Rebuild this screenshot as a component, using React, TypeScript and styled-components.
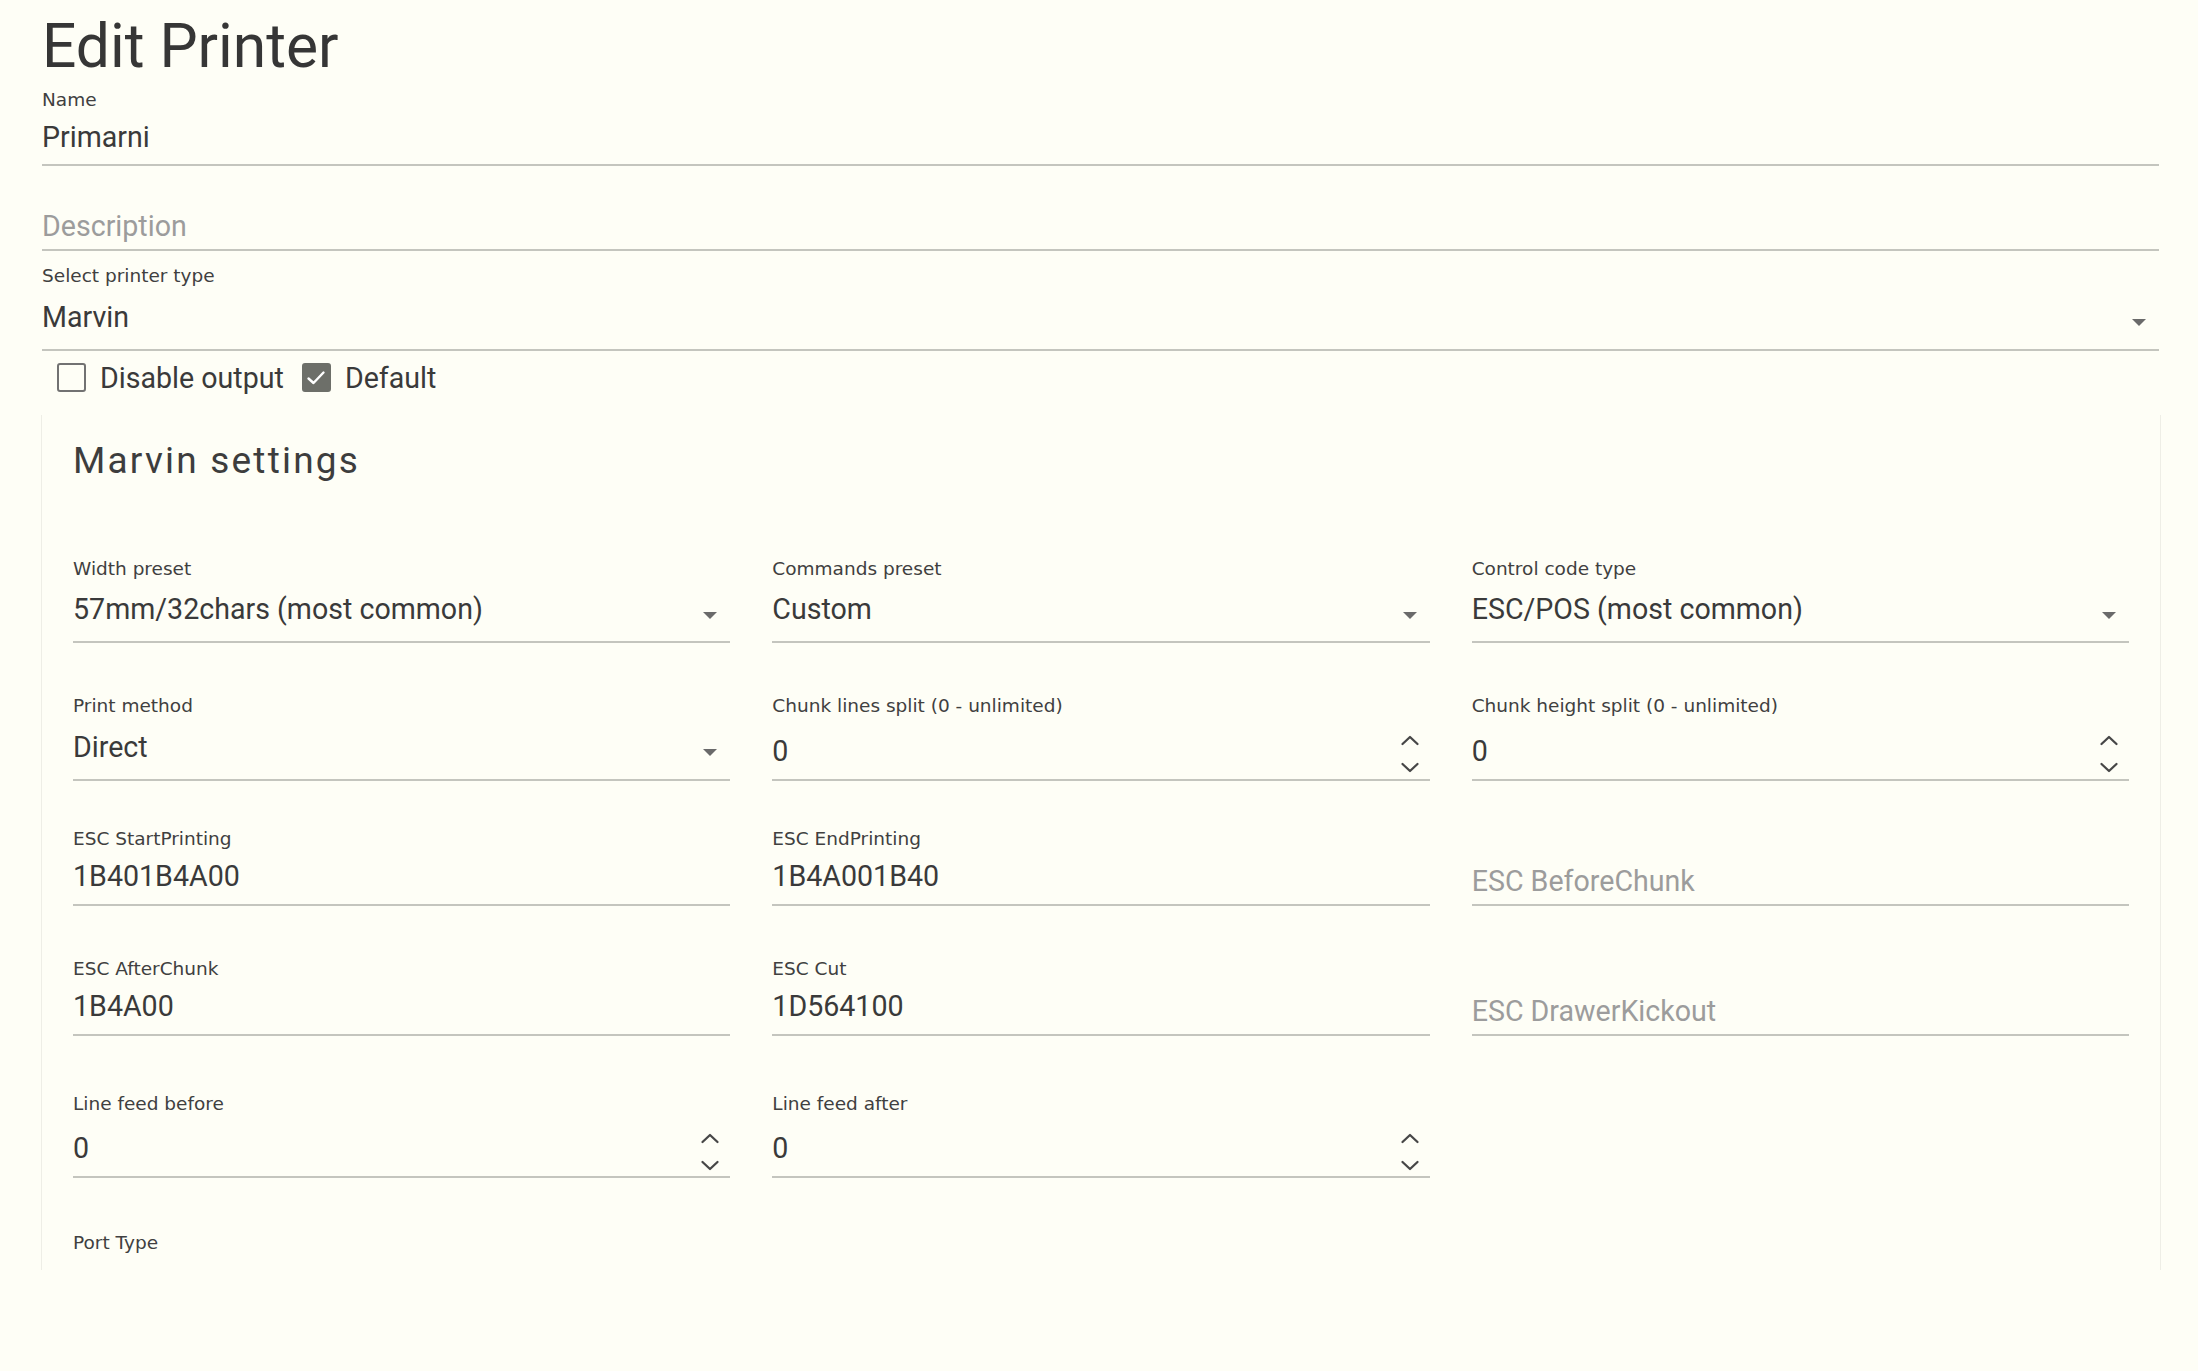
import React from "react";
import styled, { createGlobalStyle } from "styled-components";

type Kind = "text" | "select" | "number";

const Global = createGlobalStyle`
  html, body {
    margin: 0;
    padding: 0;
    background: #fefef6;
  }
  body {
    font-family: Roboto, "Noto Sans", sans-serif;
  }
`;

const Page = styled.div`
  width: 2198px;
  height: 1371px;
  box-sizing: border-box;
  padding: 17px 39px 0 42px;
  display: flex;
  flex-direction: column;
  background: #fefef6;
  overflow: hidden;
`;

const Title = styled.h1`
  margin: 0 0 14.5px;
  font: 400 60.5px/59px Roboto, sans-serif;
  color: #363636;
`;

const FieldBox = styled.div<{ $mt?: number }>`
  display: flex;
  flex-direction: column;
  min-width: 0;
  margin-top: ${(p) => p.$mt ?? 0}px;
`;

const Label = styled.label`
  display: block;
  height: 18px;
  font: 400 18.5px/18px "DejaVu Sans", Verdana, sans-serif;
  color: #404040;
  white-space: nowrap;
`;

const gapFor: Record<Kind, number> = { text: 14, select: 17.2, number: 20 };
const padFor: Record<Kind, number> = { text: 13.8, select: 18, number: 14.2 };
const PLACEHOLDER_SHIFT = 5;

const InputRow = styled.div<{ $kind: Kind }>`
  display: flex;
  align-items: flex-end;
  margin-top: ${(p) => gapFor[p.$kind]}px;
  border-bottom: 2px solid #c4c5be;
`;

const Value = styled.div<{ $kind: Kind; $placeholder?: boolean }>`
  flex: 1;
  min-width: 0;
  font: 400 28.6px/28px Roboto, sans-serif;
  color: ${(p) => (p.$placeholder ? "#9c9c9c" : "#3a3a3a")};
  padding-top: ${(p) => (p.$placeholder ? PLACEHOLDER_SHIFT : 0)}px;
  padding-bottom: ${(p) => padFor[p.$kind] - (p.$placeholder ? PLACEHOLDER_SHIFT : 0)}px;
  white-space: nowrap;
`;

const Caret = styled.span`
  flex: none;
  width: 0;
  height: 0;
  border-left: 7px solid transparent;
  border-right: 7px solid transparent;
  border-top: 7px solid #6a6a6a;
  margin: 0 13px 22.5px 8px;
`;

const Spin = styled.div`
  flex: none;
  display: flex;
  flex-direction: column;
  gap: 16px;
  margin: 0 10px 5.5px 8px;
  color: #474747;
`;

const CheckRow = styled.div`
  display: flex;
  align-items: center;
  gap: 18px;
  height: 28px;
  padding-left: 15px;
  margin-top: 13.2px;
`;

const CheckItem = styled.label`
  display: flex;
  align-items: center;
  gap: 14px;
  font: 400 28.6px/28px Roboto, sans-serif;
  color: #3a3a3a;
`;

const Box = styled.span<{ $checked?: boolean }>`
  width: 29px;
  height: 29px;
  box-sizing: border-box;
  border-radius: 3px;
  border: 2px solid ${(p) => (p.$checked ? "#6d6f69" : "#727272")};
  background: ${(p) => (p.$checked ? "#6d6f69" : "transparent")};
  display: flex;
  align-items: center;
  justify-content: center;
`;

const Panel = styled.section`
  flex: none;
  height: 855px;
  box-sizing: border-box;
  margin: 23px -2px 0 -1px;
  padding: 28.5px 31px 0;
  border-left: 1px solid #eeeee6;
  border-right: 1px solid #eeeee6;
  overflow: hidden;
`;

const PanelTitle = styled.h2`
  margin: 0 0 81.5px;
  font: 400 37px/35px Roboto, sans-serif;
  letter-spacing: 2.2px;
  color: #3d3d3d;
`;

const Grid = styled.div`
  display: grid;
  grid-template-columns: repeat(3, minmax(0, 1fr));
  column-gap: 42px;
  align-items: start;
`;

const Chevron = ({ up }: { up?: boolean }) => (
  <svg width="20" height="11" viewBox="0 0 20 11" fill="none" stroke="currentColor" strokeWidth="2.3" strokeLinecap="round" strokeLinejoin="round">
    <polyline points={up ? "2.5,9 10,2 17.5,9" : "2.5,2 10,9 17.5,2"} />
  </svg>
);

type FieldProps = {
  kind: Kind;
  label?: string;
  value?: string;
  placeholder?: string;
  mt?: number;
};

const Field = ({ kind, label, value, placeholder, mt }: FieldProps) => (
  <FieldBox $mt={mt}>
    <Label>{label ?? "\u00a0"}</Label>
    <InputRow $kind={kind}>
      {value !== undefined ? (
        <Value $kind={kind}>{value || "\u00a0"}</Value>
      ) : (
        <Value $kind={kind} $placeholder>
          {placeholder}
        </Value>
      )}
      {kind === "select" && <Caret />}
      {kind === "number" && (
        <Spin>
          <Chevron up />
          <Chevron />
        </Spin>
      )}
    </InputRow>
  </FieldBox>
);

const Empty = styled.div<{ $mt?: number }>`
  margin-top: ${(p) => p.$mt ?? 0}px;
`;

const rows: { mt: number; fields: (FieldProps | null)[] }[] = [
  {
    mt: 0,
    fields: [
      { kind: "select", label: "Width preset", value: "57mm/32chars (most common)" },
      { kind: "select", label: "Commands preset", value: "Custom" },
      { kind: "select", label: "Control code type", value: "ESC/POS (most common)" },
    ],
  },
  {
    mt: 54.4,
    fields: [
      { kind: "select", label: "Print method", value: "Direct" },
      { kind: "number", label: "Chunk lines split (0 - unlimited)", value: "0" },
      { kind: "number", label: "Chunk height split (0 - unlimited)", value: "0" },
    ],
  },
  {
    mt: 49,
    fields: [
      { kind: "text", label: "ESC StartPrinting", value: "1B401B4A00" },
      { kind: "text", label: "ESC EndPrinting", value: "1B4A001B40" },
      { kind: "text", placeholder: "ESC BeforeChunk" },
    ],
  },
  {
    mt: 54.2,
    fields: [
      { kind: "text", label: "ESC AfterChunk", value: "1B4A00" },
      { kind: "text", label: "ESC Cut", value: "1D564100" },
      { kind: "text", placeholder: "ESC DrawerKickout" },
    ],
  },
  {
    mt: 59.2,
    fields: [
      { kind: "number", label: "Line feed before", value: "0" },
      { kind: "number", label: "Line feed after", value: "0" },
      null,
    ],
  },
  {
    mt: 55.4,
    fields: [{ kind: "select", label: "Port Type", value: "" }, null, null],
  },
];

export default function App() {
  return (
    <>
      <Global />
      <Page>
        <Title>Edit Printer</Title>
        <Field kind="text" label="Name" value="Primarni" />
        <Field kind="text" placeholder="Description" mt={9} />
        <Field kind="select" label="Select printer type" value="Marvin" mt={16.4} />
        <CheckRow>
          <CheckItem>
            <Box />
            Disable output
          </CheckItem>
          <CheckItem>
            <Box $checked>
              <svg width="20" height="16" viewBox="0 0 20 16" fill="none" stroke="#ffffff" strokeWidth="2.4" strokeLinecap="round" strokeLinejoin="round">
                <polyline points="2.5,8.5 7.5,13 17.5,2.5" />
              </svg>
            </Box>
            Default
          </CheckItem>
        </CheckRow>
        <Panel>
          <PanelTitle>Marvin settings</PanelTitle>
          <Grid>
            {rows.map((row, r) =>
              row.fields.map((f, i) =>
                f ? <Field key={`${r}-${i}`} {...f} mt={row.mt} /> : <Empty key={`${r}-${i}`} $mt={row.mt} />
              )
            )}
          </Grid>
        </Panel>
      </Page>
    </>
  );
}
